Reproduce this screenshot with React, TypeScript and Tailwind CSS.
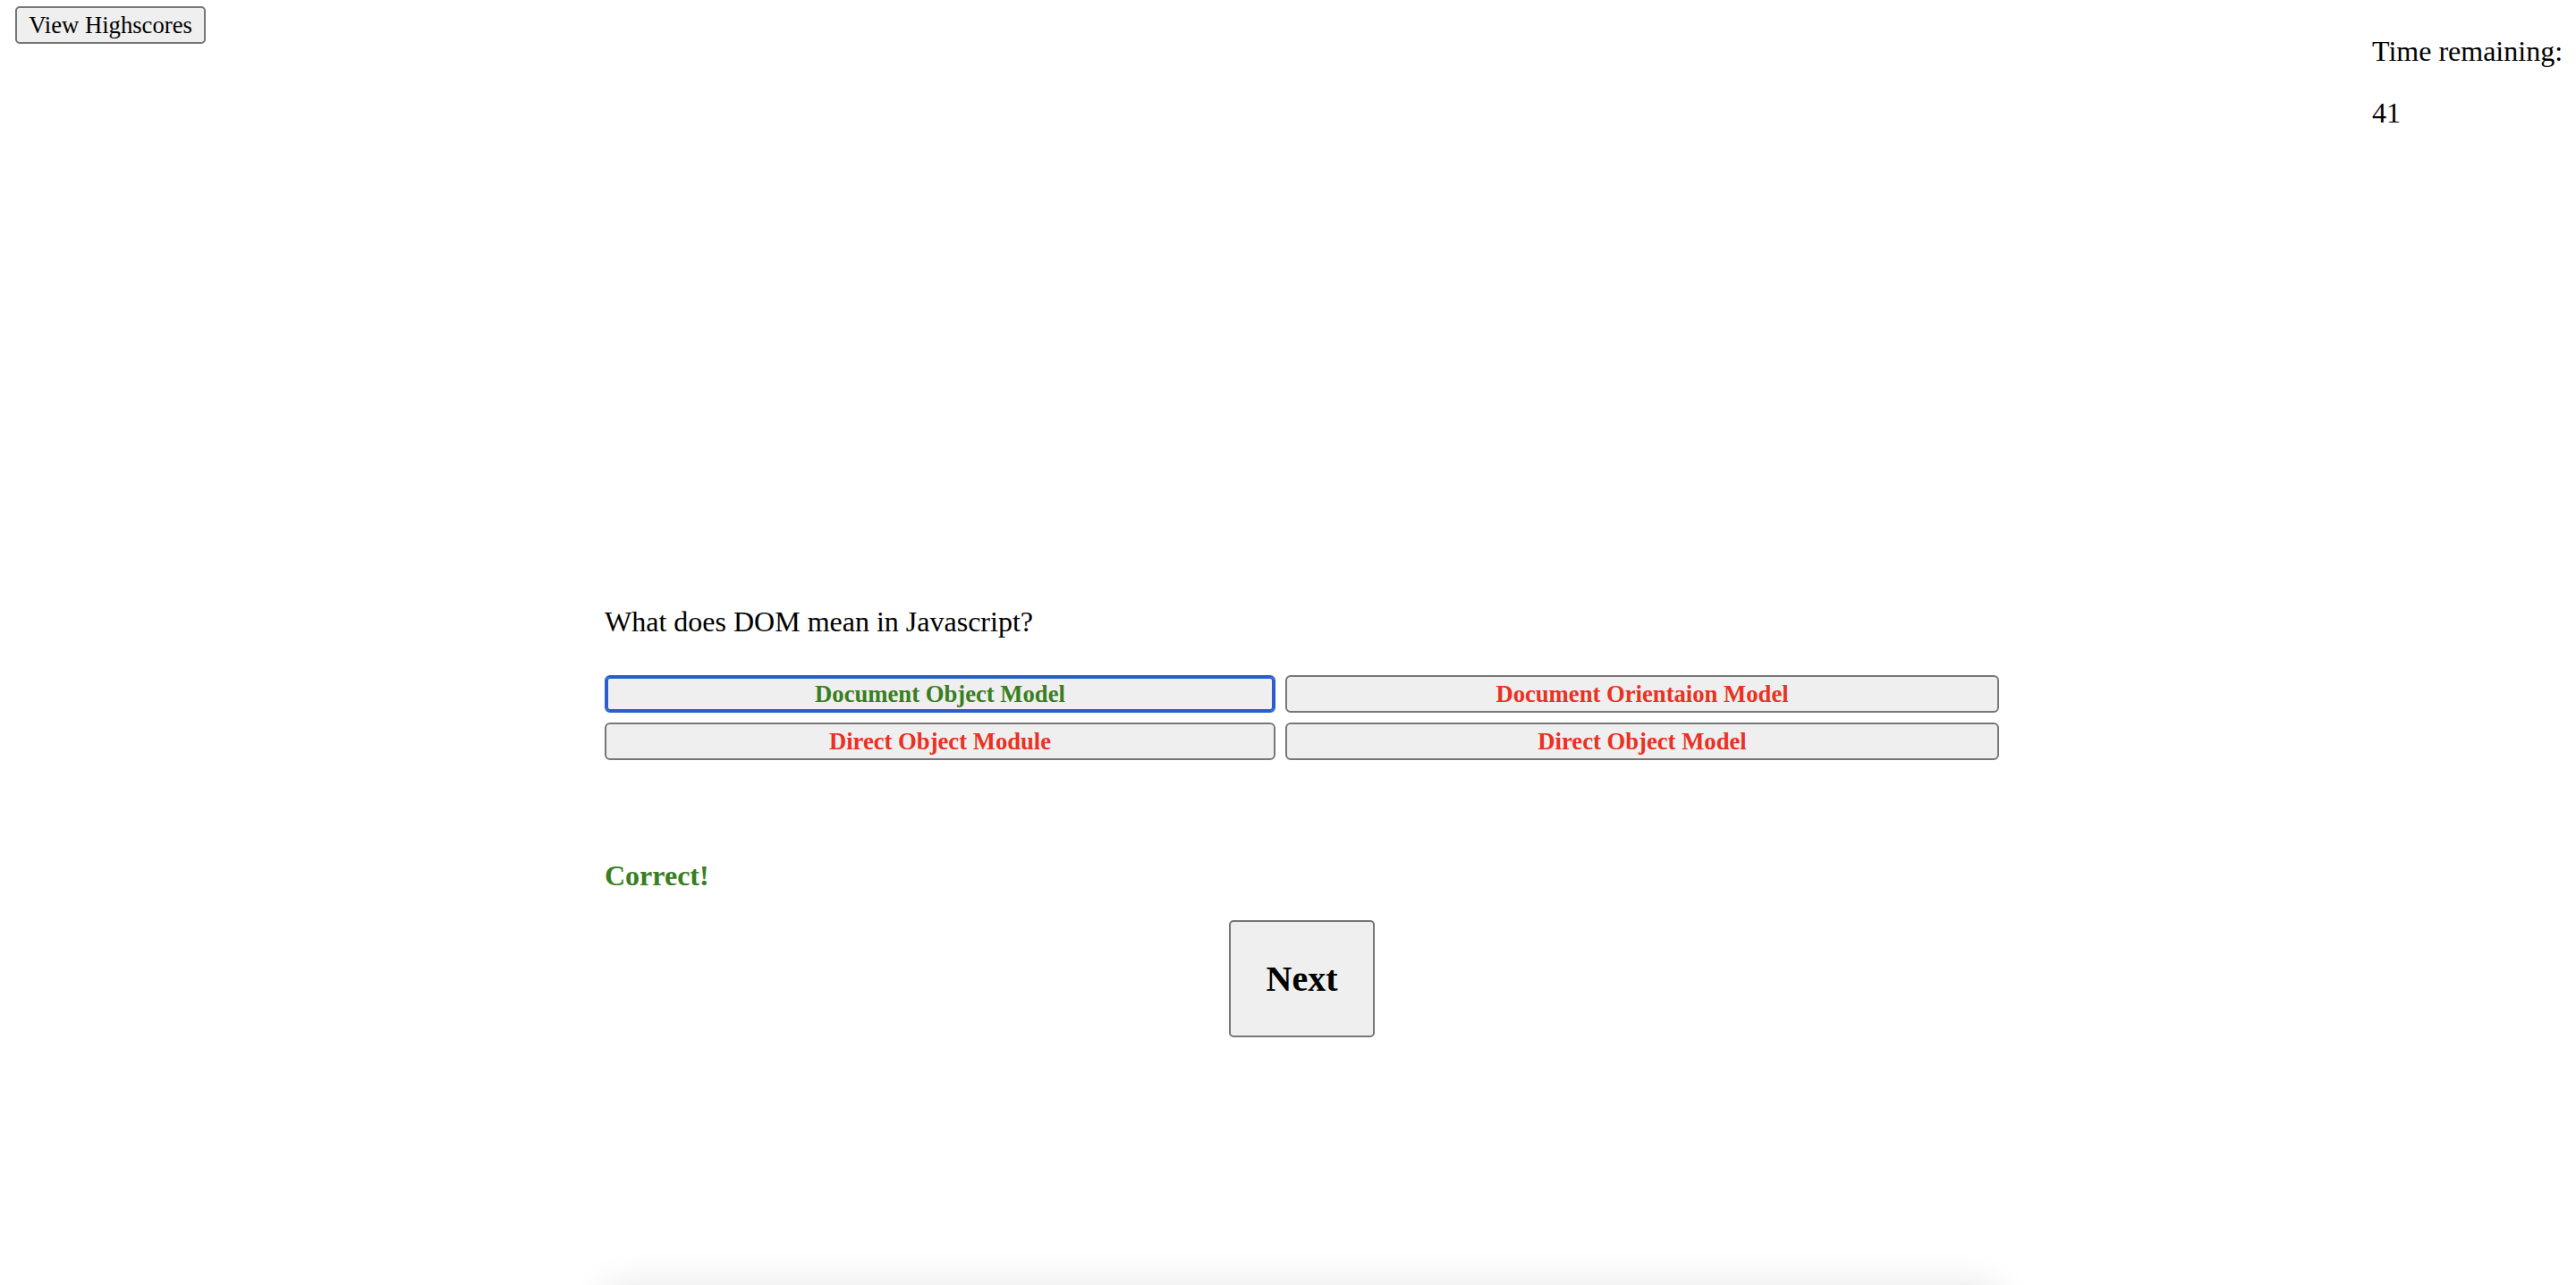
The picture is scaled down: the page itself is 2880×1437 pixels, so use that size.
const answers = [
  { text: "Document Object Model", correct: true },
  { text: "Document Orientaion Model", correct: false },
  { text: "Direct Object Module", correct: false },
  { text: "Direct Object Model", correct: false },
];

export default function App() {
  return (
    <div className="flex h-[1437px] w-full flex-col overflow-hidden bg-white font-['Liberation_Serif','Times_New_Roman',serif] text-black">
      <header className="flex items-start justify-between">
        <button className="ml-[17px] mt-[7px] flex h-[42px] w-[213px] items-center justify-center rounded-[5px] border-2 border-[#767676] bg-[#efefef] text-[26.67px] leading-none">
          View Highscores
        </button>
        <div className="mr-[19px] w-[209px] text-[32px]">
          <p className="mt-[39px] h-[36px] whitespace-nowrap leading-[36px]">Time remaining:</p>
          <p className="mt-[33px] h-[36px] leading-[36px]">41</p>
        </div>
      </header>

      <main className="ml-[676px] w-[1559px]">
        <p className="mt-[533px] h-[36px] text-[32px] leading-[36px]">What does DOM mean in Javascript?</p>

        <div className="mt-[42px] grid grid-cols-[750px_798px] gap-[11px]">
          {answers.map((a, i) => (
            <button
              key={a.text}
              className={
                i === 0
                  ? "flex h-[42px] items-center justify-center rounded-[6px] border-2 border-[#2c5ecb] bg-[#efefef] text-[26.67px] font-bold leading-none text-[#3a7e22] shadow-[inset_0_0_0_2px_#2c5ecb]"
                  : "flex h-[42px] items-center justify-center rounded-[6px] border-2 border-[#767676] bg-[#efefef] text-[26.67px] font-bold leading-none text-[#ea3124]"
              }
            >
              {a.text}
            </button>
          ))}
        </div>

        <p className="mt-[111px] h-[36px] text-[32px] font-bold leading-[36px] text-[#3a7e22]">Correct!</p>

        <div className="mt-[32px] flex justify-center">
          <button className="flex h-[131px] w-[163px] items-center justify-center rounded-[5px] border-2 border-[#767676] bg-[#efefef] text-[40px] font-bold leading-none">
            Next
          </button>
        </div>
      </main>

      {/* card below the fold, only its shadow shows */}
      <div className="mt-auto h-[60px] w-full overflow-hidden">
        <div className="ml-[672px] mt-[60px] h-[200px] w-[1566px] rounded-[24px] bg-white shadow-[0_0_40px_rgba(0,0,0,0.1)]" />
      </div>
    </div>
  );
}
